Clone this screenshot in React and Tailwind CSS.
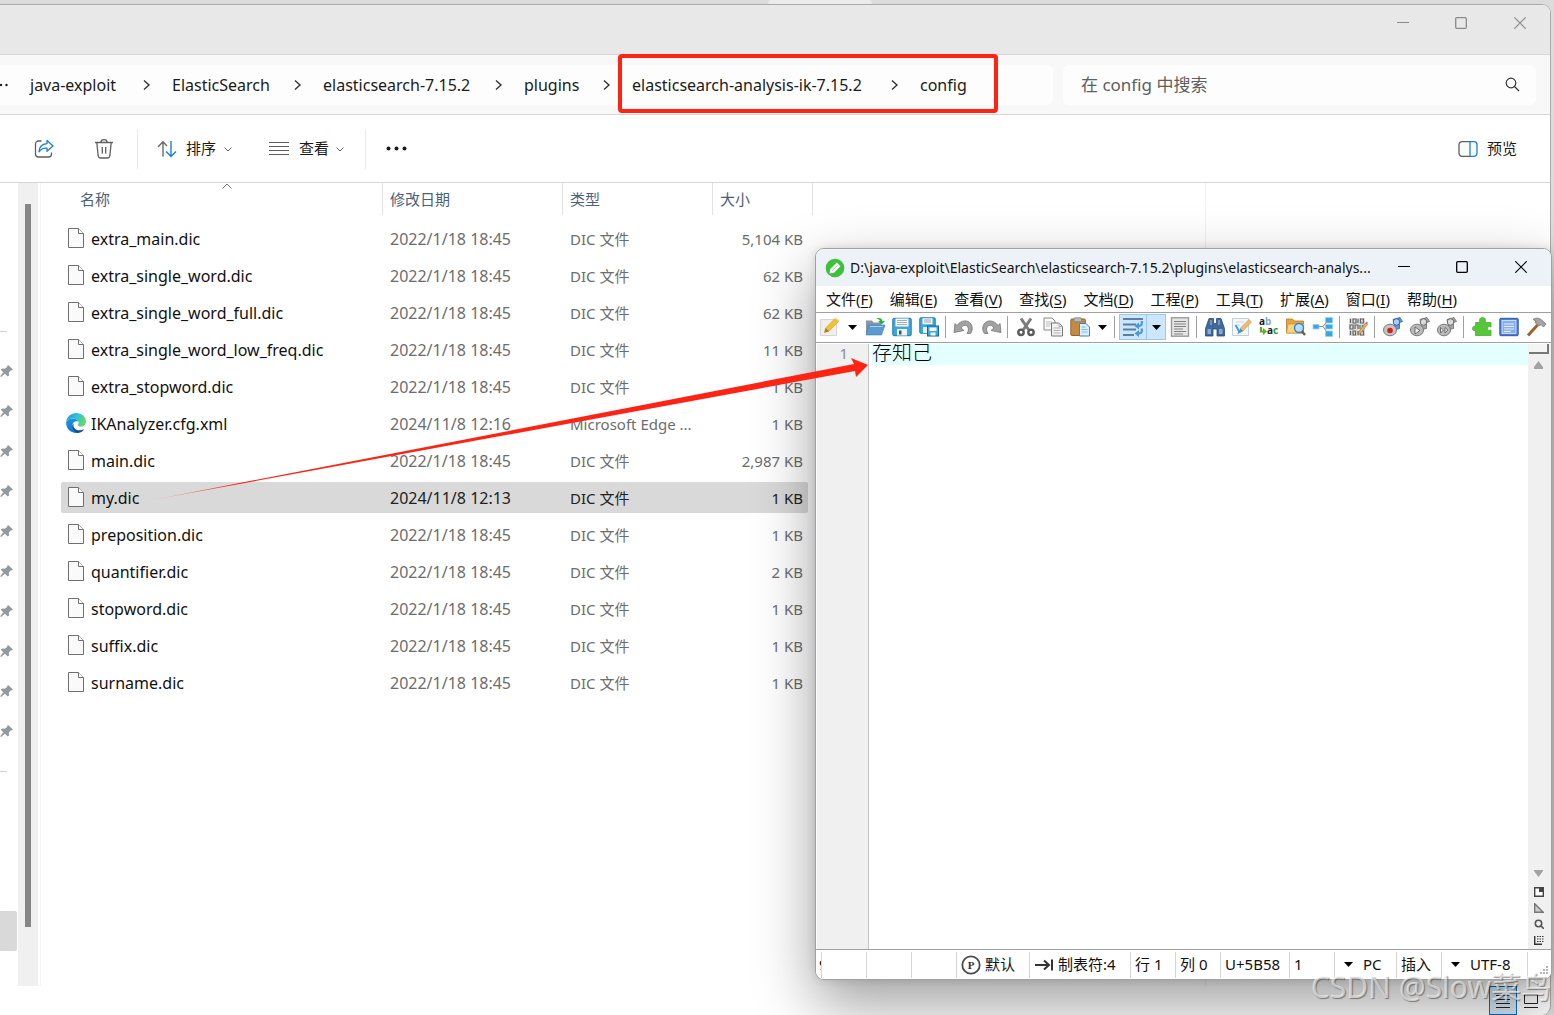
const crumbs = [
  { name: 'java-exploit', width: 'w-[91px]' },
  { name: 'ElasticSearch', width: 'w-[100px]' },
  { name: 'elasticsearch-7.15.2', width: 'w-[150px]' },
  { name: 'plugins', width: 'w-[57px]' },
  { name: 'elasticsearch-analysis-ik-7.15.2', width: 'w-[237px]' },
  { name: 'config', width: 'w-[50px]' },
]

const OLD = '2022/1/18 18:45'

const files = [
  { name: 'extra_main.dic', date: OLD, type: 'DIC 文件', size: '5,104 KB' },
  { name: 'extra_single_word.dic', date: OLD, type: 'DIC 文件', size: '62 KB' },
  { name: 'extra_single_word_full.dic', date: OLD, type: 'DIC 文件', size: '62 KB' },
  { name: 'extra_single_word_low_freq.dic', date: OLD, type: 'DIC 文件', size: '11 KB' },
  { name: 'extra_stopword.dic', date: OLD, type: 'DIC 文件', size: '1 KB' },
  { name: 'IKAnalyzer.cfg.xml', date: '2024/11/8 12:16', type: 'Microsoft Edge ...', size: '1 KB', edge: true },
  { name: 'main.dic', date: OLD, type: 'DIC 文件', size: '2,987 KB' },
  { name: 'my.dic', date: '2024/11/8 12:13', type: 'DIC 文件', size: '1 KB', selected: true },
  { name: 'preposition.dic', date: OLD, type: 'DIC 文件', size: '1 KB' },
  { name: 'quantifier.dic', date: OLD, type: 'DIC 文件', size: '2 KB' },
  { name: 'stopword.dic', date: OLD, type: 'DIC 文件', size: '1 KB' },
  { name: 'suffix.dic', date: OLD, type: 'DIC 文件', size: '1 KB' },
  { name: 'surname.dic', date: OLD, type: 'DIC 文件', size: '1 KB' },
]

const menus = [
  ['文件', 'F'],
  ['编辑', 'E'],
  ['查看', 'V'],
  ['查找', 'S'],
  ['文档', 'D'],
  ['工程', 'P'],
  ['工具', 'T'],
  ['扩展', 'A'],
  ['窗口', 'I'],
  ['帮助', 'H'],
]

/* ---------- shared bits ---------- */

function WindowControls({ className }) {
  return (
    <div className={`mr-px flex shrink-0 ${className}`}>
      <button aria-label="最小化" className="flex h-9 w-[59px] items-center justify-center">
        <svg width="12" height="12" fill="none" stroke="currentColor"><path d="M0 5.5h12" /></svg>
      </button>
      <button aria-label="最大化" className="flex h-9 w-[58px] items-center justify-center">
        <svg width="12" height="12" fill="none" stroke="currentColor" strokeWidth="1.3"><rect x="0.7" y="0.7" width="10.6" height="10.6" rx="1" /></svg>
      </button>
      <button aria-label="关闭" className="flex h-9 w-[59px] items-center justify-center">
        <svg width="12" height="12" fill="none" stroke="currentColor" strokeWidth="1.2"><path d="M0.3 0.3l11.4 11.4M11.7 0.3L0.3 11.7" /></svg>
      </button>
    </div>
  )
}

function ChevronDown() {
  return (
    <svg width="8" height="8" fill="none" stroke="#666"><path d="M0.5 2.5L4 6l3.500-3.500" /></svg>
  )
}

function Caret() {
  return (
    <svg width="9" height="5"><path d="M0 0h9L4.5 5z" fill="#000" /></svg>
  )
}

/* ---------- explorer icons ---------- */

function FileIcon() {
  return (
    <svg width="16" height="20" fill="#fafafa" stroke="#6f6f6f">
      <path d="M0.5 0.5h10l5 5v14h-15z" />
      <path d="M10.5 0.5v5h5" fill="#fff" />
    </svg>
  )
}

function EdgeIcon() {
  return (
    <svg width="20" height="20" viewBox="0 0 20 20">
      <defs>
        <linearGradient id="edgeTop" x1="0" y1="0.3" x2="1" y2="0.6">
          <stop offset="0" stopColor="#1f9fe0" />
          <stop offset="0.5" stopColor="#32c3d8" />
          <stop offset="1" stopColor="#6bdc57" />
        </linearGradient>
        <linearGradient id="edgeLeft" x1="0" y1="0" x2="0.4" y2="1">
          <stop offset="0" stopColor="#1b9de2" />
          <stop offset="1" stopColor="#1173cf" />
        </linearGradient>
      </defs>
      <path d="M0.2 9C1 3.6 5 0 10.200 0 15.800 0 20 4 20 8.600c0 3-2.200 5-5 5-2 0-3.300-.7-3.300-1.500 0-.6.900-.9.900-2.400C12.600 7.300 9.800 5.400 6.600 5.400 3.500 5.400 1.200 7 .2 9z" fill="url(#edgeTop)" />
      <path d="M0.100 9.400C1 7 3.600 5.400 6.600 5.400c3 0 5.300 1.500 5.900 3.200C9 7.200 6.200 9.800 6.200 13c0 3 2 5.800 5.200 6.900C5 20.600 0 16 .1 9.400z" fill="url(#edgeLeft)" />
      <path d="M7.800 10.400C6.500 13.500 8.500 17.500 14.500 17.200c1.600-.1 3-.7 3.900-1.200C16.800 18.600 13.800 20 11.200 19.900 7.500 18.800 5.800 15.800 6.200 12.700 6.300 11.700 7 10.800 7.800 10.400z" fill="#0c4f9e" />
    </svg>
  )
}

function PinIcon() {
  return (
    <svg width="14" height="14" viewBox="0 0 14 14" fill="#8f9aa1">
      <path d="M7.800 0.800L13 5.400l-1.400 1-1 0-1.800 2.400.2 2.800-1.200 1L4.900 9.700 1 13l-.8-.7L3.300 8.200.8 5.800l1.400-1.200 2.600.2L7 3z" />
    </svg>
  )
}

function ShareIcon() {
  return (
    <svg width="20" height="20" fill="none" strokeWidth="1.3" strokeLinejoin="round">
      <path d="M7.500 2H4.500a3 3 0 0 0-3 3v10a3 3 0 0 0 3 3h10a3 3 0 0 0 3-3v-1.500" stroke="#5f5f5f" />
      <path d="M13 1.500L19 7l-6 5.200V9.200C9.500 8.800 7 10 5 12.800 5.200 8.200 8 5 13 4.600z" stroke="#1a7fd4" />
    </svg>
  )
}

function TrashIcon() {
  return (
    <svg width="20" height="20" fill="none" stroke="#5f5f5f" strokeWidth="1.300">
      <path d="M1 3.500h18M7 3.300a3 2.600 0 0 1 6 0M2.800 3.700l1.400 13.300a2.300 2.300 0 0 0 2.300 2h7a2.300 2.300 0 0 0 2.300-2l1.400-13.300M8.300 8v6.500M11.700 8v6.500" />
    </svg>
  )
}

function SortIcon() {
  return (
    <svg width="20" height="18" fill="none" strokeWidth="1.4">
      <path d="M6 16.500V2M1 7l5-5.300L10 6" stroke="#6a6a6a" />
      <path d="M14 1v15M9.200 11.500l4.800 5 5-5" stroke="#1a7fd4" />
    </svg>
  )
}

function ViewIcon() {
  return (
    <svg width="20" height="14" stroke="#5c5c5c"><path d="M0 0.500h20M0 4.500h20M0 8.500h20M0 12.500h20" /></svg>
  )
}

/* ---------- explorer ---------- */

function AddressBar() {
  return (
    <div className="flex h-[60px] shrink-0 items-center gap-[10px] border-b border-[#d6d6d6] bg-[#f8f8f8] pr-[14px]">
      <nav className="flex h-10 flex-1 items-center rounded-r-md bg-[#fdfdfd] text-[16px] text-[#1b1b1b]">
        <button aria-label="更多" className="w-[30px]">
          <svg width="9" height="4" fill="#1b1b1b"><circle cx="1" cy="2" r="1.200" /><circle cx="6.500" cy="2" r="1.200" /></svg>
        </button>
        {crumbs.map((c, i) => (
          <div key={c.name} className="flex items-center">
            {i > 0 && (
              <svg width="51" height="12" fill="none" stroke="#333" strokeWidth="1.400"><path d="M23 1.500l5 4.500-5 4.500" /></svg>
            )}
            <a href="#" className={`whitespace-nowrap ${c.width}`}>{c.name}</a>
          </div>
        ))}
      </nav>
      <label className="flex h-10 w-[473px] items-center rounded-md bg-[#fdfdfd] pr-4 pl-[18px]">
        <input
          type="text"
          aria-label="搜索"
          placeholder="在 config 中搜索"
          className="min-w-0 flex-1 bg-transparent text-[17px] outline-none placeholder:text-[#5f5f5f]"
        />
        <svg width="15" height="15" fill="none" stroke="#333" strokeWidth="1.200"><circle cx="6" cy="6" r="4.800" /><path d="M9.500 9.500l4.500 4.500" /></svg>
      </label>
    </div>
  )
}

function CommandBar() {
  return (
    <div className="flex h-[68px] shrink-0 items-center border-b border-[#d6d6d6] pl-[34px] text-[15px] text-[#1b1b1b]">
      <button aria-label="共享"><ShareIcon /></button>
      <button aria-label="删除" className="ml-10"><TrashIcon /></button>
      <div className="ml-[23px] h-10 w-px bg-[#ebebeb]" />
      <button className="ml-[19px] flex items-center">
        <SortIcon />
        <span className="mr-2 ml-[9px]">排序</span>
        <ChevronDown />
      </button>
      <button className="ml-[37px] flex items-center">
        <ViewIcon />
        <span className="mr-[7px] ml-[10px]">查看</span>
        <ChevronDown />
      </button>
      <div className="ml-[21px] h-10 w-px bg-[#ebebeb]" />
      <button aria-label="更多选项" className="ml-5">
        <svg width="21" height="5" fill="#1b1b1b"><circle cx="2.500" cy="2.500" r="2" /><circle cx="10.500" cy="2.500" r="2" /><circle cx="18.500" cy="2.500" r="2" /></svg>
      </button>
      <button className="mr-[33px] ml-auto flex items-center gap-[9px]">
        <svg width="20" height="16" fill="#fafafa" strokeWidth="1.300">
          <path d="M12 0.700H4a3 3 0 0 0-3 3v8.600a3 3 0 0 0 3 3h8" stroke="#5f5f5f" />
          <path d="M12 0.700h4a3 3 0 0 1 3 3v8.600a3 3 0 0 1-3 3h-4z" stroke="#1a7fd4" />
        </svg>
        预览
      </button>
    </div>
  )
}

function NavPane() {
  return (
    <div className="flex w-[18px] shrink-0 flex-col overflow-hidden pt-[148px]">
      <div className="h-px w-[7px] shrink-0 bg-[#d0d0d0]" />
      <div className="mt-[19px] mb-5 shrink-0">
        {Array.from({ length: 10 }, (_, i) => (
          <div key={i} className="flex h-10 items-center"><PinIcon /></div>
        ))}
      </div>
      <div className="h-px w-[7px] shrink-0 bg-[#d0d0d0]" />
      <div className="mt-[139px] h-10 w-[17px] shrink-0 rounded-r-xs bg-[#d9d9d9]" />
    </div>
  )
}

function FileTable() {
  const th = 'h-8 border-r border-[#e2e2e2] pl-[7px] text-left font-normal'
  return (
    <table className="table-fixed border-separate border-spacing-0 self-start text-[15px] leading-5 whitespace-nowrap">
      <thead className="text-[#4c607a]">
        <tr>
          <th className={`${th} relative w-[322px] pl-[19px]`}>
            名称
            <svg className="absolute top-0 left-[161px]" width="10" height="7" fill="none" stroke="#777"><path d="M0.500 5.500L5 1l4.500 4.500" /></svg>
          </th>
          <th className={`${th} w-[180px]`}>修改日期</th>
          <th className={`${th} w-[150px]`}>类型</th>
          <th className={`${th} w-[100px]`}>大小</th>
        </tr>
        <tr><td className="h-[5px] p-0" /></tr>
      </thead>
      <tbody>
        {files.map(f => {
          const bg = f.selected ? 'bg-[#d9d9d9] text-[#222]' : 'text-[#6d6d6d]'
          return (
            <tr key={f.name}>
              <td className="h-[37px] p-0">
                <div className={`flex h-[31px] items-center rounded-l-xs ${bg}`}>
                  <span className="flex w-[30px] justify-center pb-px">{f.edge ? <EdgeIcon /> : <FileIcon />}</span>
                  <span className="text-[16px] text-[#111]">{f.name}</span>
                </div>
              </td>
              <td className="p-0"><div className={`flex h-[31px] items-center pl-[7px] text-[16px] ${bg}`}>{f.date}</div></td>
              <td className="p-0"><div className={`flex h-[31px] items-center pl-[7px] ${bg}`}>{f.type}</div></td>
              <td className="p-0"><div className={`mr-[5px] flex h-[31px] items-center justify-end rounded-r-xs pr-[5px] ${bg}`}>{f.size}</div></td>
            </tr>
          )
        })}
      </tbody>
    </table>
  )
}

function Explorer() {
  return (
    <div className="mr-[3px] flex min-h-0 flex-1 flex-col overflow-hidden rounded-r-[9px] border-t border-r border-[#ababab] bg-white">
      <div className="flex h-[50px] shrink-0 justify-end border-b border-[#d6d6d6] bg-[#e8e8e8]">
        <WindowControls className="text-[#8a8a8a]" />
      </div>
      <AddressBar />
      <CommandBar />
      <div className="flex min-h-0 flex-1">
        <NavPane />
        <div className="flex w-5 shrink-0 justify-center bg-[#f0f0f0] pt-[21px] pb-[59px]">
          <div className="w-[6px] bg-[#868686]" />
        </div>
        <div className="ml-[2px] flex flex-1 border-l border-[#f5f5f5] pl-5">
          <FileTable />
        </div>
        <div className="w-[345px] shrink-0 border-l border-[#f0f0f0]" />
      </div>
      <div className="flex h-[29px] shrink-0 items-start justify-end gap-[7px] pr-3">
        <button aria-label="详细信息" className="flex h-[29px] w-7 items-center justify-center border border-[#0a6cbd] bg-[#d6e8f5]">
          <svg width="14" height="14" stroke="#222"><path d="M0 1.500h14M0 5.500h14M0 9.500h14M0 13.500h14" /></svg>
        </button>
        <button aria-label="大图标" className="flex h-[29px] items-center">
          <svg width="14" height="14" fill="none" stroke="#222"><path d="M0.500 0.500h13v9h-13zM0 13.500h14" /></svg>
        </button>
      </div>
    </div>
  )
}

/* ---------- editor toolbar icons, all on a 20px grid ---------- */

const icons = {
  create: (
    <>
      <path d="M0.500 2.500h16v16h-16z" fill="#efefec" stroke="#d4d4d4" />
      <path d="M4.500 15.500l1.200-4.500L15 1.500l3.500 3L9 14.200z" fill="#f2c230" stroke="#d9a52c" strokeWidth="0.700" />
      <path d="M4.500 15.500l1.200-4.500 3.300 3.200z" fill="#9a7a4a" />
      <path d="M15 1.500l1-1 3.500 3-1 1z" fill="#f6d98a" />
    </>
  ),
  open: (
    <>
      <path d="M1 17V3.500h6l1.500 2H16V17z" fill="#8399a8" />
      <path d="M3.500 8H20l-3.500 10H1z" fill="#5b9bd0" stroke="#3d7fb0" strokeWidth="0.600" />
      <path d="M5 9.500h12.500" stroke="#a7d0ef" />
      <path d="M11 1.500c3-1.200 6-.5 6.500 2.500H20l-3.500 3.500L13 4h2c-.5-1.500-2-2.200-4-2.500z" fill="#2faf3c" />
    </>
  ),
  save: (
    <>
      <rect x="0.800" y="1.300" width="18.400" height="17.400" rx="1" fill="#3fa7dc" stroke="#1c78ae" />
      <path d="M3.500 1.500h13v8h-13z" fill="#f5fafd" />
      <path d="M5 3.500h10M5 5.500h10M5 7.500h10" stroke="#999" strokeWidth="0.800" />
      <path d="M5 12h10v6.500H5z" fill="#eef3f6" />
      <path d="M7 13.500h2.500v4H7z" fill="#456" />
    </>
  ),
  saveAll: (
    <>
      <rect x="0.800" y="0.800" width="15.400" height="15.400" rx="1" fill="#3fa7dc" stroke="#1c78ae" />
      <path d="M3.500 1.300h10v6h-10z" fill="#f5fafd" />
      <path d="M5 3h7M5 5h7" stroke="#888" strokeWidth="0.800" />
      <path d="M4 10h5v6H4z" fill="#eef3f6" />
      <rect x="8.500" y="9" width="11" height="10" fill="#3fa7dc" stroke="#14659a" />
      <path d="M10.500 10.500h7v3.500h-7zM11.500 15.500h5v3h-5z" fill="#f5fafd" />
    </>
  ),
  undo: (
    <path d="M1 6.500l2 2C7 2.800 14 2.500 17 7c2 3.500 1.500 7-.5 9.500h-3.500c1.700-2.500 2-5 .500-7-1.700-2-4.500-1.500-6.500 1.500l3 2.500-10 2z" fill="#a2a2a2" stroke="#757575" strokeWidth="0.800" />
  ),
  redo: (
    <path d="M19 6.500l-2 2C13 2.800 6 2.500 3 7c-2 3.500-1.500 7 .5 9.500H7c-1.700-2.500-2-5-.5-7 1.700-2 4.500-1.500 6.500 1.500l-3 2.500 10 2z" fill="#a2a2a2" stroke="#757575" strokeWidth="0.800" />
  ),
  cut: (
    <>
      <path d="M5 1.500l7.500 11M15 1.500L7.500 12.500" stroke="#7c7c7c" strokeWidth="3" />
      <circle cx="5" cy="15.300" r="2.700" fill="none" stroke="#5a5a5a" strokeWidth="2.400" />
      <circle cx="15" cy="15.300" r="2.700" fill="none" stroke="#5a5a5a" strokeWidth="2.400" />
    </>
  ),
  copy: (
    <>
      <path d="M1 1h8l3 3v9H1z" fill="#fafafa" stroke="#888" />
      <path d="M3 5h6M3 7h6M3 9h4" stroke="#bbb" />
      <path d="M8.500 6H16l3.500 3.500V19h-11z" fill="#f2f2f2" stroke="#777" />
      <path d="M16 6v3.500h3.500M10.500 11h7M10.500 13.500h7M10.500 16h7" stroke="#b0b0b0" fill="none" />
    </>
  ),
  paste: (
    <>
      <rect x="0.800" y="2" width="14.500" height="16.500" rx="1" fill="#c48a45" stroke="#94642b" />
      <rect x="4" y="0.800" width="7.500" height="4" rx="1" fill="#b9b9b9" stroke="#777" strokeWidth="0.700" />
      <path d="M9.500 6.500H16l3.500 3.500v9h-10z" fill="#d9efff" stroke="#3a86bd" />
      <path d="M11.500 10h4M11.500 12.500h6M11.500 15h6" stroke="#7fb9de" />
    </>
  ),
  wrap: (
    <>
      <path d="M0 2h20M0 7.500h13M0 12.500h13M0 18h11" stroke="#5b7ea6" strokeWidth="1.800" />
      <path d="M18.800 4v2.500c0 2-1 2.500-4 2.500M18.800 11.500v2.500c0 2-1 2.500-4 2.500" fill="none" stroke="#4a98dd" strokeWidth="2.200" />
      <path d="M11.500 9L16 5.500v7zM11.500 16.500L16 13v7z" fill="#4a98dd" />
    </>
  ),
  page: (
    <>
      <rect x="1.500" y="0.800" width="17" height="18.400" fill="#e6e6e6" stroke="#9a9a9a" strokeWidth="1.400" />
      <path d="M4 4.500h12M4 7h12M4 9.500h12M4 12h9M4 14.500h12M4 17h9" stroke="#808080" />
    </>
  ),
  find: (
    <>
      <path d="M4 1.500h4.500v5h3v-5H16l3.500 10v7.500h-7.500V12h-4v7H0.500v-7.500z" fill="#40689a" stroke="#2a4c78" strokeWidth="0.800" />
      <path d="M2.500 12h3.500v5H2.500zM14 12h3.500v5H14z" fill="#86abd6" />
      <path d="M6 3v5M14 3v5" stroke="#a9c5e4" />
    </>
  ),
  edit: (
    <>
      <path d="M0.500 1.500h16v17h-16z" fill="#f3f8fc" stroke="#c6ced5" />
      <path d="M4 5h8M4 8h4" stroke="#c6d4e0" />
      <path d="M3.500 8l4 7" stroke="#4a9be0" strokeWidth="2" />
      <path d="M7.500 15l1-4L17 2.500l2.500 2.500-8.500 9z" fill="#eac070" stroke="#c09448" strokeWidth="0.600" />
      <path d="M5 17.500l3.500-6 2.500 2.500z" fill="#3a8edb" />
    </>
  ),
  replace: (
    <>
      <text x="0" y="8" fontSize="10" fontWeight="700" fill="#222">a<tspan fill="#8fa9c9">b</tspan></text>
      <path d="M2 10v4.500h2.500" fill="none" stroke="#5fae1e" strokeWidth="2.200" />
      <path d="M4 11l4 3.500-4 3.500z" fill="#5fae1e" />
      <text x="8" y="17" fontSize="10" fontWeight="700" fill="#222">a<tspan fill="#2f9a3c">c</tspan></text>
    </>
  ),
  findFiles: (
    <>
      <path d="M0.500 16V2h6l1.500 2h9.500v12z" fill="#e8a33c" stroke="#b9772a" strokeWidth="0.800" />
      <path d="M2 7h16l-1.500 9h-16z" fill="#f8d585" stroke="#c08a35" strokeWidth="0.600" />
      <circle cx="13" cy="11" r="4.500" fill="#b5e0fa" stroke="#3d84c6" strokeWidth="1.500" />
      <path d="M16 14.500l3 3.500" stroke="#7c5a3a" strokeWidth="2.500" />
    </>
  ),
  tree: (
    <>
      <path d="M5 9.500h5M10 9.500L15 3.500M10 9.500l5 7" stroke="#888" />
      <path d="M0 7.500h6v4.500H0zM12.500 0.500h7v5.500h-7zM12.500 7.500h7V12h-7zM12.500 14h7v5.500h-7z" fill="#3da5dd" stroke="#93d3f2" strokeWidth="0.800" />
    </>
  ),
  hex: (
    <>
      <rect x="1" y="1" width="16" height="18" fill="#ddd" />
      <path d="M2.500 2v4M5 2h3v4H5zM10 2v4M12.500 2h3v4h-3zM2 8h3v4H2zM7 12V8h3v4M12 8v4M14.500 8v4M2.500 14v4M5 14h2.500v4H5zM10 14v4M12.500 14h3v4h-3z" fill="none" stroke="#666" strokeWidth="1.200" />
      <path d="M10 18l1-3.500L17.500 6l2 1.500-7 8.800z" fill="#e0b36a" stroke="#9a6f35" strokeWidth="0.600" />
      <path d="M17.500 6l1-1.500 1.500 1.300-.8 1.500z" fill="#b06ad0" />
    </>
  ),
  record: (
    <>
      <path d="M10 2.500l7-2 2.500 4-3 1v6l-4 1z" fill="#5b96dc" stroke="#2f66a8" strokeWidth="0.800" />
      <circle cx="13.500" cy="5" r="3.300" fill="#a9cdf4" stroke="#2f66a8" />
      <ellipse cx="7" cy="13" rx="6.500" ry="5.800" fill="#c4c4c4" stroke="#7a7a7a" />
      <circle cx="7" cy="13.500" r="2.800" fill="#d2201c" />
    </>
  ),
  play: (
    <>
      <path d="M10 2.500l7-2 2.500 4-3 1v6l-4 1z" fill="#a5a5a5" stroke="#6b6b6b" strokeWidth="0.800" />
      <circle cx="13.500" cy="5" r="3.300" fill="#d9d9d9" stroke="#6b6b6b" />
      <ellipse cx="7" cy="13" rx="6.500" ry="5.800" fill="#b9b9b9" stroke="#7a7a7a" />
      <path d="M5 10l5 3.500-5 3.500z" fill="#eee" stroke="#555" strokeWidth="0.800" />
    </>
  ),
  playMulti: (
    <>
      <path d="M10 2.500l7-2 2.500 4-3 1v6l-4 1z" fill="#a5a5a5" stroke="#6b6b6b" strokeWidth="0.800" />
      <circle cx="13.500" cy="5" r="3.300" fill="#d9d9d9" stroke="#6b6b6b" />
      <ellipse cx="7" cy="13" rx="6.500" ry="5.800" fill="#b9b9b9" stroke="#7a7a7a" />
      <path d="M3.500 10.500l3 2.500-3 3zM8 10.500l3 2.500-3 3z" fill="#eee" stroke="#555" strokeWidth="0.800" />
    </>
  ),
  plugin: (
    <path d="M3.500 5.500h4.500C6.500 2 8.500 0.500 10.500 0.500S14.500 2 13 5.500h6v4.500c-2.500-1-3.500 0-3.500 1.500s1 2.500 3.500 1.500V18.500H3.500V13.500C1 14.500 0.500 12.500 0.500 11.500S1.500 8.500 3.500 9.500z" fill="#55c53a" stroke="#4ab031" strokeWidth="0.800" />
  ),
  panel: (
    <>
      <rect x="0.800" y="1.300" width="18.400" height="17.400" rx="1" fill="#4a7fdc" stroke="#34599f" />
      <rect x="3" y="3.500" width="14" height="13" fill="#86aef0" stroke="#dfeafc" strokeWidth="0.800" />
      <path d="M5 7h10M5 9.500h10M5 12h10M5 14.500h7" stroke="#e6effd" strokeWidth="1.200" />
    </>
  ),
  hammer: (
    <>
      <path d="M2 18.500L11.500 8" stroke="#a0622c" strokeWidth="3" />
      <path d="M7 2.500c3-2 6-1.500 8 0L20 7l-2.500 3-2.500-2.500-2 1.500-4-3.500 1-1.500z" fill="#a5a5a5" stroke="#6e6e6e" strokeWidth="0.800" />
    </>
  ),
}

const toolGroups = [
  ['create', 'v', 'open', 'save', 'saveAll'],
  ['undo', 'redo'],
  ['cut', 'copy', 'paste', 'v'],
  ['wrap', 'page'],
  ['find', 'edit', 'replace', 'findFiles', 'tree'],
  ['hex'],
  ['record', 'play', 'playMulti'],
  ['plugin', 'panel', 'hammer'],
]

function ToolIcon({ name }) {
  return <svg className="overflow-visible" width="20" height="20" viewBox="0 0 20 20">{icons[name]}</svg>
}

function Tool({ name }) {
  if (name === 'v') {
    return <button aria-label="更多" className="flex h-[26px] w-[18px] items-center justify-center"><Caret /></button>
  }
  if (name === 'wrap') {
    return (
      <div className="flex h-[26px] divide-x divide-[#99c9ef] border border-[#99c9ef] bg-[#cce6fb]">
        <button aria-label="wrap" className="flex w-[27px] items-center justify-center"><ToolIcon name="wrap" /></button>
        <button aria-label="更多" className="flex w-[18px] items-center justify-center"><Caret /></button>
      </div>
    )
  }
  return (
    <button aria-label={name} className="flex h-[26px] w-[27px] items-center justify-center"><ToolIcon name={name} /></button>
  )
}

/* ---------- editor ---------- */

function ScrollColumn() {
  return (
    <div className="flex w-[23px] shrink-0 flex-col items-center bg-[#f0f0f0] pr-[2px]">
      <div className="h-[10px] w-5 shrink-0 border-r-2 border-b-2 border-[#777] bg-[#f4f4f4]" />
      <svg className="mt-[7px] shrink-0" width="9" height="8"><path d="M0 8V6l4.500-6L9 6v2z" fill="#a3a3a3" /></svg>
      <svg className="mt-auto shrink-0" width="9" height="7"><path d="M0 0h9v1L4.500 7 0 1z" fill="#a3a3a3" /></svg>
      <div className="mt-[10px] mb-1 flex flex-col gap-[6px]">
        <svg width="10" height="10"><path d="M0.700 0.700h8.600v8.600H0.700z" fill="#fff" stroke="#444" strokeWidth="1.400" /><path d="M5 1h4v4H5z" fill="#444" /></svg>
        <svg width="10" height="10"><path d="M0.700 0.700v8.600h8.600z" fill="#ccc" stroke="#777" strokeWidth="1.400" /></svg>
        <svg width="10" height="10" fill="none" stroke="#555" strokeWidth="1.600"><circle cx="4.500" cy="4.500" r="3.200" /><path d="M6.800 6.800L10 10" /></svg>
        <svg width="10" height="10" fill="none" stroke="#333"><path d="M0.700 1v8.300H8" strokeWidth="1.400" /><path d="M3 1.500h7M3 4h7M3 6.500h7" strokeDasharray="1.500 1" /></svg>
      </div>
    </div>
  )
}

function Cell({ className, children }) {
  return <div className={`flex h-[26px] shrink-0 items-center overflow-hidden border-r border-[#d5d5d5] ${className}`}>{children}</div>
}

function StatusBar() {
  return (
    <div className="relative flex h-[30px] shrink-0 items-center border-t border-[#a0a0a0] bg-white text-[15px] whitespace-nowrap text-[#111]">
      <Cell className="w-[6px] pl-[3px]">9</Cell>
      <Cell className="w-[45px]" />
      <Cell className="w-[45px]" />
      <Cell className="w-[45px]" />
      <Cell className="w-[73px] gap-1 pl-1">
        <svg width="20" height="20"><circle cx="10" cy="10" r="8.700" fill="#fff" stroke="#4a4a4a" strokeWidth="1.800" /><text x="10" y="14" textAnchor="middle" fontSize="11" fontWeight="700" fontFamily="Liberation Serif, serif" fill="#333">P</text></svg>
        默认
      </Cell>
      <Cell className="w-[101px] gap-[5px] pl-[5px]">
        <svg width="18" height="12" fill="none" stroke="#333" strokeWidth="2"><path d="M0 6h13M9 1.500L14 6 9 10.500M17 0.500v11" /></svg>
        制表符:4
      </Cell>
      <Cell className="w-[45px] pl-1">行 1</Cell>
      <Cell className="w-[45px] pl-1">列 0</Cell>
      <Cell className="w-[69px] pl-1">U+5B58</Cell>
      <Cell className="w-[45px] pl-1">1</Cell>
      <Cell className="w-[62px] gap-[10px] pl-[9px]"><Caret />PC</Cell>
      <Cell className="w-[45px] pl-1">插入</Cell>
      <Cell className="w-[86px] gap-[10px] pl-[9px]"><Caret />UTF-8</Cell>
      <svg className="absolute right-[2px] bottom-1" width="9" height="9" fill="#b5b5b5"><path d="M6 0h2v2H6zM3 3h2v2H3zM6 3h2v2H6zM0 6h2v2H0zM3 6h2v2H3zM6 6h2v2H6z" /></svg>
    </div>
  )
}

function Editor() {
  return (
    <div className="absolute top-[248px] right-[2px] bottom-[35px] left-[815px] flex flex-col overflow-hidden rounded-[9px] border border-[#a0a0a0] bg-white shadow-[0_24px_60px_rgba(0,0,0,0.38),0_0_10px_rgba(0,0,0,0.12)]">
      <div className="flex h-[37px] shrink-0 items-center bg-[#edf2f9] pl-[9px]">
        <svg width="20" height="20" viewBox="0 0 20 20">
          <circle cx="10" cy="10" r="9.300" fill="#3cc13b" />
          <path d="M4.500 15.500l.8-4.500 6.500-6.500 3.700 3.700-6.500 6.500z" fill="#fff" />
          <path d="M7 13l5.500-5.500" stroke="#9edf9c" />
        </svg>
        <div className="ml-[5px] flex-1 overflow-hidden text-[14px] whitespace-nowrap text-[#111]">
          D:\java-exploit\ElasticSearch\elasticsearch-7.15.2\plugins\elasticsearch-analys...
        </div>
        <WindowControls className="self-start text-black" />
      </div>
      <div className="flex h-[26px] shrink-0 items-center gap-[17px] pl-[10px] text-[15px] whitespace-nowrap text-[#111]">
        {menus.map(([label, key]) => (
          <button key={key}>{label}(<u className="underline-offset-2">{key}</u>)</button>
        ))}
      </div>
      <div className="flex h-[31px] shrink-0 items-start border-y border-[#a0a0a0] pt-px">
        {toolGroups.map((group, i) => (
          <div key={i} className="flex items-center">
            {i > 0 && <div className="mr-1 ml-[3px] h-[22px] w-px bg-[#a0a0a0]" />}
            {group.map((name, j) => <Tool key={j} name={name} />)}
          </div>
        ))}
      </div>
      <div className="flex min-h-0 flex-1 pt-px pl-px">
        <div className="w-[52px] shrink-0 border-r border-[#c4c4c4] bg-[#f0f0f0] pr-5 text-right text-[15px] leading-[18px] text-[#8c8c8c]">1</div>
        <textarea
          aria-label="编辑区"
          spellCheck={false}
          defaultValue="存知己"
          className="ml-[3px] min-w-0 flex-1 resize-none bg-[linear-gradient(#e3ffff_21px,transparent_21px)] text-[20px] leading-[18px] font-light text-black outline-none"
        />
        <ScrollColumn />
      </div>
      <StatusBar />
    </div>
  )
}

/* ---------- drawn marks on top of both windows ---------- */

function Marks() {
  return (
    <div className="pointer-events-none">
      <div className="absolute top-[54px] left-[618px] h-[59px] w-[380px] rounded-[4px] border-4 border-[#ff2314]" />
      <svg className="absolute top-[350px] left-[150px]" width="720" height="152">
        <defs>
          <linearGradient id="arrowFade" x1="0" x2="1">
            <stop offset="0" stopColor="#ff2314" stopOpacity="0.250" />
            <stop offset="0.120" stopColor="#ff2314" />
          </linearGradient>
        </defs>
        <path d="M2 150L704 14l-3-6 17 7-12 12-1-6z" fill="url(#arrowFade)" />
      </svg>
      <div className="absolute right-[3px] bottom-2 text-[30px] leading-10 whitespace-nowrap text-white/60 [text-shadow:1px_1px_1px_rgba(0,0,0,0.400)]">
        CSDN @Slow菜鸟
      </div>
    </div>
  )
}

export default function App() {
  return (
    <div className="relative flex h-screen flex-col overflow-hidden bg-[#dcdcdc] font-['Noto_Sans','Noto_Sans_CJK_SC',sans-serif]">
      <div className="flex h-1 shrink-0 justify-center">
        <div className="ml-[86px] w-[104px] rounded-t-full bg-[#ebebeb]" />
      </div>
      <Explorer />
      <Editor />
      <Marks />
    </div>
  )
}
